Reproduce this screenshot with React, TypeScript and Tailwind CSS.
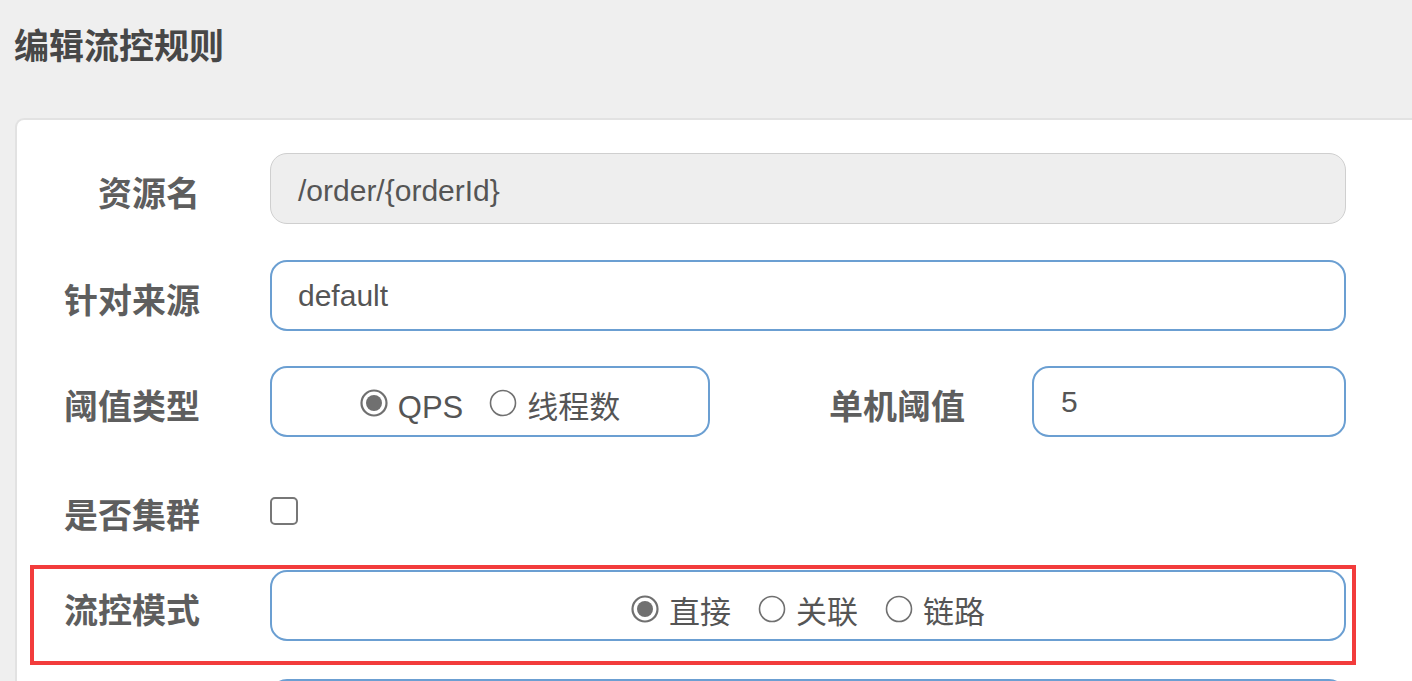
import React from 'react'

const font = { fontFamily: '"Liberation Sans", "Noto Sans CJK SC", sans-serif' }

function Radio({ checked, label }: { checked?: boolean; label: string }) {
  return (
    <span className="flex items-center gap-[10px]">
      <svg width="28" height="28" viewBox="0 0 28 28" className="shrink-0">
        <circle cx="14" cy="14" r="12.5" fill="white" stroke="#707070" strokeWidth={checked ? 2.2 : 1.6} />
        {checked && <circle cx="14" cy="14" r="8" fill="#707070" />}
      </svg>
      <span className="mt-[10px]">{label}</span>
    </span>
  )
}

function Label({ text, className = 'w-[185px]' }: { text: string; className?: string }) {
  return (
    <div className={`${className} shrink-0 pt-[10px] text-right text-[34px] font-bold text-[#5e5e5e] leading-none`}>
      {text}
    </div>
  )
}

export default function App() {
  return (
    <div className="h-[681px] w-full overflow-hidden bg-[#efefef]" style={font}>
      {/* Title */}
      <div className="pl-[14px] pt-[29px] text-[35px] font-bold leading-none text-[#474747]">
        编辑流控规则
      </div>

      {/* Card */}
      <div className="ml-[15px] mt-[54px] w-[1420px] h-[700px] rounded-tl-[9px] border-l-2 border-t-2 border-[#e2e2e2] bg-white">
        {/* 资源名 */}
        <div className="mt-[33px] flex items-center gap-[70px]">
          <Label text="资源名" className="w-[183px]" />
          <div className="flex h-[71px] w-[1076px] items-center rounded-[17px] border border-[#cfcfcf] bg-[#eeeeee] pl-[27px] pt-[4px] text-[30px] text-[#555]">
            /order/{'{orderId}'}
          </div>
        </div>

        {/* 针对来源 */}
        <div className="mt-[36px] flex items-center gap-[70px]">
          <Label text="针对来源" className="w-[183px]" />
          <div className="flex h-[71px] w-[1076px] items-center rounded-[17px] border-2 border-[#6b9fd2] bg-white pl-[26px] text-[30px] text-[#555]">
            default
          </div>
        </div>

        {/* 阈值类型 / 单机阈值 */}
        <div className="mt-[35px] flex items-center">
          <Label text="阈值类型" className="w-[183px]" />
          <div className="ml-[70px] flex h-[71px] w-[440px] items-center justify-center gap-[26px] rounded-[17px] border-2 border-[#6b9fd2] pt-[3px] text-[31px] text-[#555]">
            <Radio checked label="QPS" />
            <Radio label="线程数" />
          </div>
          <Label text="单机阈值" className="w-[255px]" />
          <div className="ml-[67px] flex h-[71px] w-[314px] items-center rounded-[17px] border-2 border-[#6b9fd2] pl-[27px] text-[30px] text-[#555]">
            5
          </div>
        </div>

        {/* 是否集群 */}
        <div className="mt-[38px] flex h-[71px] items-center gap-[70px]">
          <Label text="是否集群" className="w-[183px]" />
          <div className="h-[28px] w-[28px] rounded-[5px] border-2 border-[#777] bg-white" />
        </div>

        {/* 流控模式 (highlighted) */}
        <div className="ml-[13px] mt-[19px] w-[1326px] border-[4px] border-[#f23c3c] pb-[20px] pt-[1px]">
          <div className="flex items-center gap-[70px]">
            <Label text="流控模式" className="w-[166px]" />
            <div className="flex h-[71px] w-[1076px] items-center justify-center gap-[27px] rounded-[17px] border-2 border-[#6b9fd2] pt-[6px] text-[31px] text-[#555]">
              <Radio checked label="直接" />
              <Radio label="关联" />
              <Radio label="链路" />
            </div>
          </div>
        </div>

        {/* next row, cut off */}
        <div className="mt-[14px] flex items-center gap-[70px]">
          <div className="w-[183px] shrink-0" />
          <div className="h-[71px] w-[1076px] rounded-[17px] border-2 border-[#6b9fd2]" />
        </div>
      </div>
    </div>
  )
}
